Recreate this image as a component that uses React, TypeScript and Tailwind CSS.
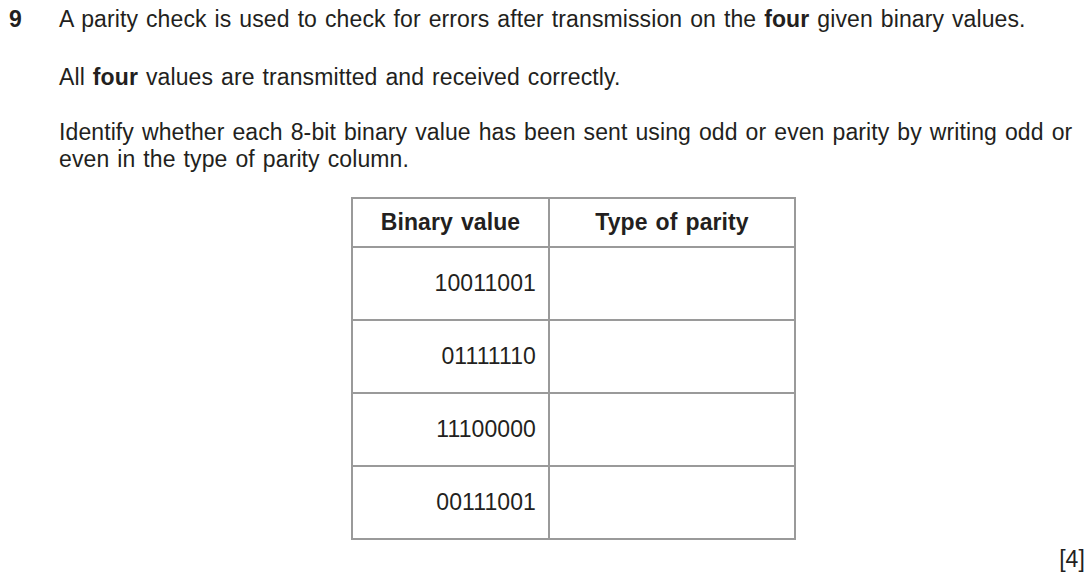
const rows = ["10011001", "01111110", "11100000", "00111001"];

export default function App() {
  return (
    <div className="w-[1092px] h-[582px] bg-white text-[#231f20] text-[23px] leading-[27px] tracking-[0.1px] [word-spacing:1.5px] font-['Liberation_Sans',Arial,sans-serif] overflow-hidden">
      <div className="flex pt-[6px]">
        <div className="w-[59px] pl-[9px] font-bold">9</div>
        <div className="flex-1">
          <p className="whitespace-nowrap">
            A parity check is used to check for errors after transmission on the <b>four</b> given binary values.
          </p>
          <p className="mt-[31px]">
            All <b>four</b> values are transmitted and received correctly.
          </p>
          <p className="mt-[28px] whitespace-nowrap">
            Identify whether each 8-bit binary value has been sent using odd or even parity by writing odd or
            <br />
            even in the type of parity column.
          </p>
          <table className="mt-[24px] ml-[292px] border-collapse">
            <thead>
              <tr className="h-[49px]">
                <th className="w-[197px] border-2 border-[#9a9a9a] font-bold text-center">Binary value</th>
                <th className="w-[246px] border-2 border-[#9a9a9a] font-bold text-center">Type of parity</th>
              </tr>
            </thead>
            <tbody>
              {rows.map((r) => (
                <tr key={r} className="h-[73px]">
                  <td className="border-2 border-[#9a9a9a] text-right pr-[12px]">{r}</td>
                  <td className="border-2 border-[#9a9a9a]"></td>
                </tr>
              ))}
            </tbody>
          </table>
          <div className="text-right pr-[7px] mt-[6px]">[4]</div>
        </div>
      </div>
    </div>
  );
}
